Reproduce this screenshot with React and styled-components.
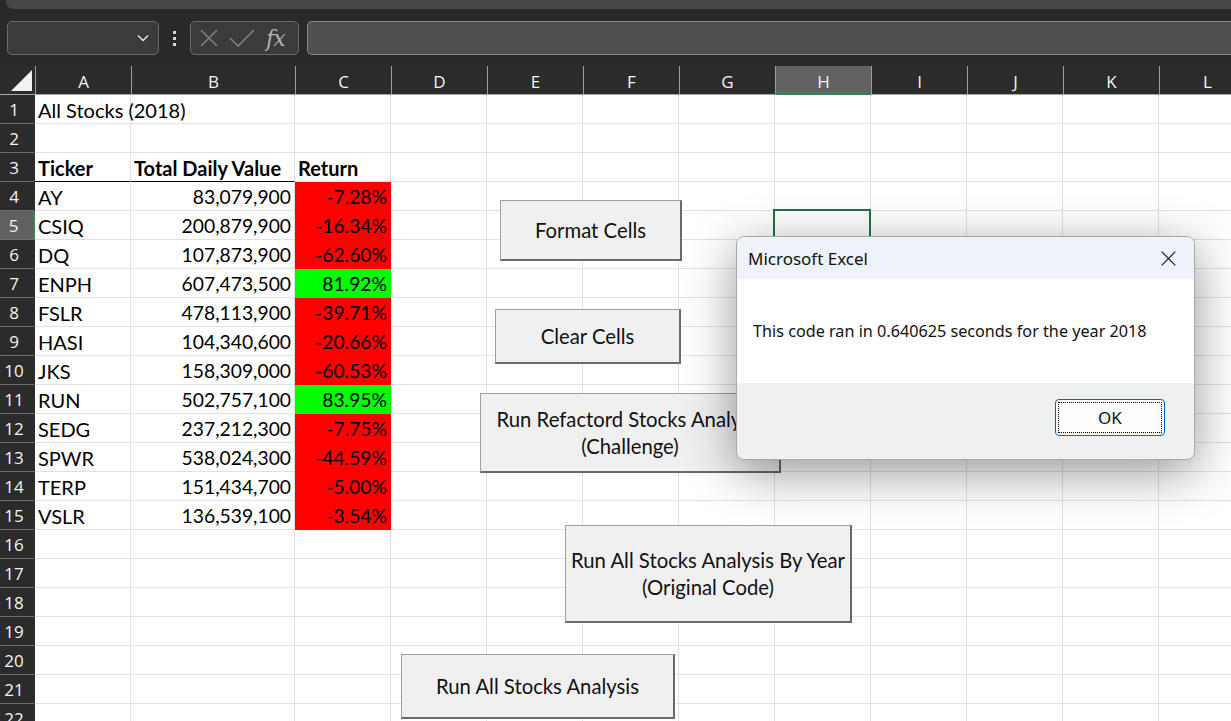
import React from 'react';
import styled, { createGlobalStyle } from 'styled-components';

const GlobalStyle = createGlobalStyle`
  html, body {
    margin: 0;
    padding: 0;
    background: #292929;
  }
`;

const COLS = ['A', 'B', 'C', 'D', 'E', 'F', 'G', 'H', 'I', 'J', 'K', 'L'];
const COL_WIDTHS = [96, 164, 96, 96, 96, 96, 96, 96, 96, 96, 96, 96];

const stocks = [
  ['AY', '83,079,900', '-7.28%', false],
  ['CSIQ', '200,879,900', '-16.34%', false],
  ['DQ', '107,873,900', '-62.60%', false],
  ['ENPH', '607,473,500', '81.92%', true],
  ['FSLR', '478,113,900', '-39.71%', false],
  ['HASI', '104,340,600', '-20.66%', false],
  ['JKS', '158,309,000', '-60.53%', false],
  ['RUN', '502,757,100', '83.95%', true],
  ['SEDG', '237,212,300', '-7.75%', false],
  ['SPWR', '538,024,300', '-44.59%', false],
  ['TERP', '151,434,700', '-5.00%', false],
  ['VSLR', '136,539,100', '-3.54%', false],
];

const Window = styled.div`
  position: relative;
  width: 1231px;
  height: 721px;
  overflow: hidden;
  background: #292929;
  font-family: Lato, 'Liberation Sans', sans-serif;
`;

const RibbonEdge = styled.div`
  height: 9px;
  margin-left: 6px;
  background: #474747;
  border-bottom-left-radius: 8px;
`;

const FormulaBar = styled.div`
  display: flex;
  align-items: stretch;
  height: 34px;
  margin: 12px 0 11px 7px;
`;

const NameBox = styled.div`
  box-sizing: border-box;
  width: 152px;
  border: 1px solid #6b6b6b;
  border-radius: 5px;
  background: #3b3b3b;
  display: flex;
  align-items: center;
  justify-content: flex-end;
  padding-right: 8px;
`;

const Grip = styled.div`
  width: 31px;
  display: flex;
  flex-direction: column;
  align-items: center;
  justify-content: center;
  gap: 3px;

  span {
    width: 3px;
    height: 3px;
    background: #d8d8d8;
  }
`;

const FnBox = styled.div`
  box-sizing: border-box;
  width: 109px;
  border: 1px solid #6b6b6b;
  border-radius: 5px;
  background: #3b3b3b;
  display: flex;
  align-items: center;
  gap: 10px;
  padding-left: 8px;
`;

const Fx = styled.span`
  font-family: 'DejaVu Serif', 'Liberation Serif', serif;
  font-style: italic;
  font-size: 22px;
  color: #b0b0b0;
  margin-left: 1px;
  letter-spacing: -1px;
`;

const FormulaInput = styled.div`
  flex: 1;
  margin-left: 8px;
  border: 1px solid #8a8a8a;
  border-right: none;
  border-radius: 5px 0 0 5px;
  background: #4f4f4f;
`;

const Sheet = styled.div`
  position: relative;
  display: grid;
  grid-template-columns: 35px ${COL_WIDTHS.map((w) => `${w}px`).join(' ')};
  grid-auto-rows: 29px;
`;

const Corner = styled.div`
  background: #2b2b2b;
  border-bottom: 1px solid #a8a8a8;
  position: relative;

  &::after {
    content: '';
    position: absolute;
    right: 3px;
    bottom: 3px;
    border-style: solid;
    border-width: 0 0 21px 21px;
    border-color: transparent transparent #f2f2f2 transparent;
  }
`;

const ColHead = styled.div`
  box-sizing: border-box;
  background: ${(p) => (p.$active ? '#626262' : '#2b2b2b')};
  border-left: 1px solid #9c9c9c;
  border-bottom: ${(p) => (p.$active ? '2px solid #2b8a57' : '1px solid #a8a8a8')};
  color: #f4f4f4;
  font-family: 'Open Sans', 'Noto Sans', sans-serif;
  font-size: 17px;
  display: flex;
  align-items: center;
  justify-content: center;
  padding-top: 3px;
`;

const RowHead = styled.div`
  box-sizing: border-box;
  background: ${(p) => (p.$active ? '#606060' : '#2b2b2b')};
  border-bottom: 1px solid #6e6e6e;
  border-right: ${(p) => (p.$active ? '2px solid #2b8a57' : '1px solid #2b2b2b')};
  color: #f4f4f4;
  font-family: 'Open Sans', 'Noto Sans', sans-serif;
  font-size: 17px;
  display: flex;
  align-items: center;
  justify-content: center;
  padding-right: 6px;
  padding-top: 1px;
`;

const Cell = styled.div`
  box-sizing: border-box;
  background: ${(p) => p.$fill || '#ffffff'};
  border-right: 1px solid ${(p) => p.$fill || '#e1e1e1'};
  border-bottom: 1px solid ${(p) => (p.$rule ? '#000000' : p.$fill || '#e1e1e1')};
  color: #000;
  font-size: ${(p) => (p.$right ? '19.3px' : '20px')};
  font-weight: ${(p) => (p.$bold ? 700 : 400)};
  white-space: nowrap;
  overflow: visible;
  display: flex;
  align-items: center;
  justify-content: ${(p) => (p.$right ? 'flex-end' : 'flex-start')};
  padding: 1px 3px 0 3px;
  position: relative;
  z-index: ${(p) => (p.$spill ? 1 : 0)};
`;

const SelectedCell = styled.div`
  position: absolute;
  left: 773px;
  top: 143px;
  width: 94px;
  height: 25px;
  border: 2px solid #217346;
  z-index: 2;
`;

const FormButton = styled.div`
  position: absolute;
  box-sizing: border-box;
  left: ${(p) => p.$x}px;
  top: ${(p) => p.$y}px;
  width: ${(p) => p.$w}px;
  height: ${(p) => p.$h}px;
  background: #f0f0f0;
  border-top: 1px solid #a0a0a0;
  border-left: 1px solid #a0a0a0;
  border-right: 2px solid #6a6a6a;
  border-bottom: 2px solid #6a6a6a;
  display: flex;
  align-items: center;
  justify-content: center;
  text-align: center;
  font-size: 20.3px;
  line-height: 27px;
  color: #111;
  z-index: 3;
`;

const Dialog = styled.div`
  position: absolute;
  left: 736px;
  top: 236px;
  width: 459px;
  height: 224px;
  box-sizing: border-box;
  border: 1px solid #a9a9a9;
  border-radius: 8px;
  overflow: hidden;
  display: flex;
  flex-direction: column;
  background: #f0f0f0;
  box-shadow: 0 12px 50px rgba(0, 0, 0, 0.42);
  z-index: 5;
  font-family: 'Noto Sans', 'Open Sans', sans-serif;
`;

const TitleBar = styled.div`
  height: 42px;
  background: #eef2f9;
  display: flex;
  align-items: center;
  justify-content: space-between;
  padding: 0 17px 0 11px;
  font-size: 17px;
  color: #111;
`;

const Body = styled.div`
  height: 104px;
  background: #ffffff;
  display: flex;
  align-items: center;
  padding-left: 16px;
  font-size: 16.2px;
  color: #111;
`;

const Footer = styled.div`
  flex: 1;
  display: flex;
  justify-content: flex-end;
  align-items: flex-start;
  padding: 16px 29px 0 0;
`;

const OkButton = styled.div`
  box-sizing: border-box;
  width: 110px;
  height: 37px;
  border: 1px solid #0067c0;
  border-radius: 4px;
  background: #fdfdfd;
  padding: 2px;

  span {
    box-sizing: border-box;
    display: flex;
    align-items: center;
    justify-content: center;
    width: 100%;
    height: 100%;
    border: 1px dotted #000;
    font-size: 17px;
    color: #111;
  }
`;

const Chevron = () => (
  <svg width="14" height="14" viewBox="0 0 14 14">
    <path d="M2 4.5l5 5 5-5" fill="none" stroke="#e6e6e6" strokeWidth="1.5" />
  </svg>
);

const CrossIcon = ({ size = 20, color = '#7f7f7f', width = 1.6 }) => (
  <svg width={size} height={size} viewBox="0 0 20 20">
    <path d="M2 2l16 16M18 2L2 18" stroke={color} strokeWidth={width} fill="none" />
  </svg>
);

const CheckIcon = () => (
  <svg width="26" height="20" viewBox="0 0 26 20">
    <path d="M1 10l8 8L25 2" stroke="#7f7f7f" strokeWidth="1.6" fill="none" />
  </svg>
);

function renderRow(r) {
  const cells = [];
  const stock = r >= 4 && r <= 15 ? stocks[r - 4] : null;
  COLS.forEach((c, i) => {
    const key = `${c}${r}`;
    if (r === 1 && i === 0) {
      cells.push(
        <Cell key={key} $spill>
          All Stocks (2018)
        </Cell>
      );
    } else if (r === 3 && i < 3) {
      const label = ['Ticker', 'Total Daily Value', 'Return'][i];
      cells.push(
        <Cell key={key} $bold $rule={i < 2}>
          {label}
        </Cell>
      );
    } else if (stock && i === 0) {
      cells.push(<Cell key={key}>{stock[0]}</Cell>);
    } else if (stock && i === 1) {
      cells.push(
        <Cell key={key} $right>
          {stock[1]}
        </Cell>
      );
    } else if (stock && i === 2) {
      cells.push(
        <Cell key={key} $right $fill={stock[3] ? '#00ff00' : '#ff0000'}>
          {stock[2]}
        </Cell>
      );
    } else {
      cells.push(<Cell key={key} />);
    }
  });
  return cells;
}

const App = () => {
  const rows = Array.from({ length: 22 }, (_, i) => i + 1);
  return (
    <Window>
      <GlobalStyle />
      <RibbonEdge />
      <FormulaBar>
        <NameBox>
          <Chevron />
        </NameBox>
        <Grip>
          <span />
          <span />
          <span />
        </Grip>
        <FnBox>
          <CrossIcon />
          <CheckIcon />
          <Fx>fx</Fx>
        </FnBox>
        <FormulaInput />
      </FormulaBar>
      <Sheet>
        <Corner />
        {COLS.map((c) => (
          <ColHead key={c} $active={c === 'H'}>
            {c}
          </ColHead>
        ))}
        {rows.map((r) => (
          <React.Fragment key={r}>
            <RowHead $active={r === 5}>{r}</RowHead>
            {renderRow(r)}
          </React.Fragment>
        ))}

        <SelectedCell />

        <FormButton $x={500} $y={134} $w={182} $h={61}>
          Format Cells
        </FormButton>
        <FormButton $x={495} $y={243} $w={186} $h={55}>
          Clear Cells
        </FormButton>
        <FormButton $x={480} $y={327} $w={301} $h={80}>
          Run Refactord Stocks Analysis
          <br />
          (Challenge)
        </FormButton>
        <FormButton $x={565} $y={459} $w={287} $h={98}>
          Run All Stocks Analysis By Year
          <br />
          (Original Code)
        </FormButton>
        <FormButton $x={401} $y={588} $w={274} $h={65}>
          Run All Stocks Analysis
        </FormButton>
      </Sheet>

      <Dialog>
        <TitleBar>
          <span>Microsoft Excel</span>
          <CrossIcon size={17} color="#1a1a1a" width={1.4} />
        </TitleBar>
        <Body>This code ran in 0.640625 seconds for the year 2018</Body>
        <Footer>
          <OkButton>
            <span>OK</span>
          </OkButton>
        </Footer>
      </Dialog>
    </Window>
  );
};

export default App;
